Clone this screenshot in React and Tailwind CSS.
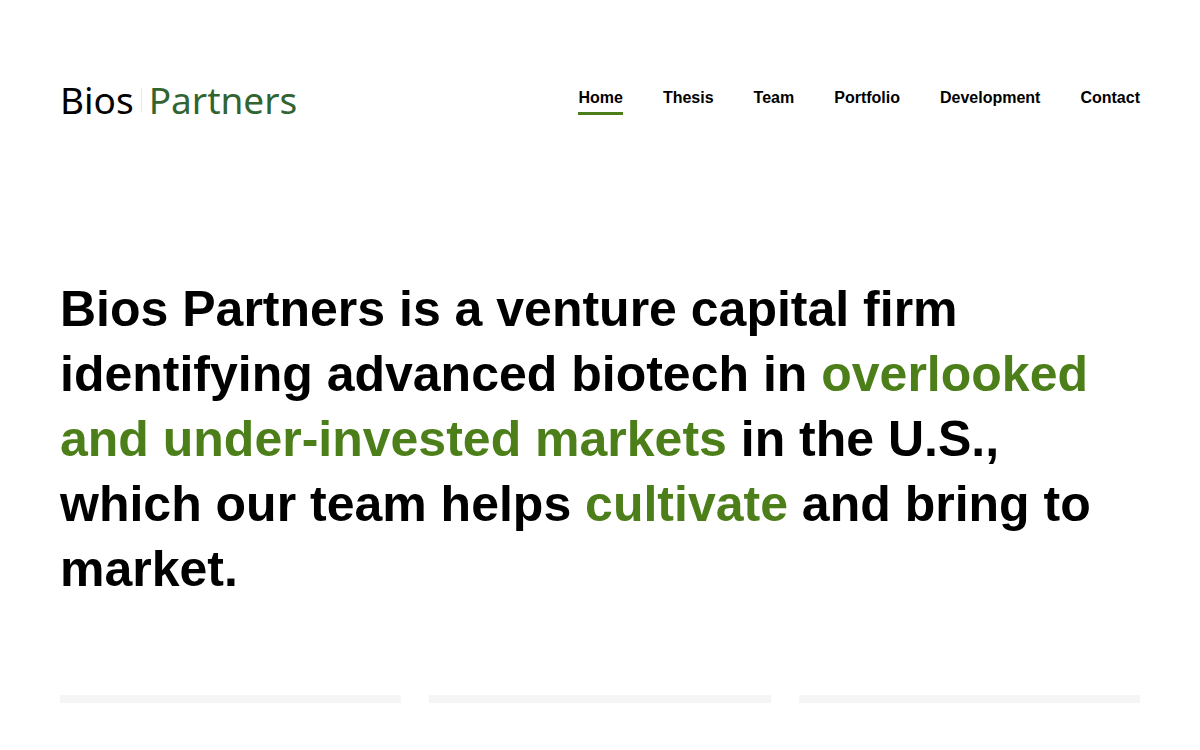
const navItems = ['Home', 'Thesis', 'Team', 'Portfolio', 'Development', 'Contact'];

const Logo = () => (
    <a
        href="#"
        className="flex items-center font-['Noto_Sans','Open_Sans',sans-serif] text-[37px] leading-[48px]"
    >
        <span className="text-black">Bios</span>
        <span className="mx-[7px] h-6 w-px bg-gray-200" />
        <span className="text-[#326431]">Partners</span>
    </a>
);

const Header = () => (
    <header className="flex items-start justify-between pt-[76px]">
        <Logo />
        <nav className="mt-2.5 flex gap-10">
            {navItems.map((item, i) => (
                <a
                    key={item}
                    href="#"
                    className={`border-b-3 pb-0.5 text-base leading-6 font-bold text-black ${i === 0 ? 'border-[#4c7f19]' : 'border-transparent'}`}
                >
                    {item}
                </a>
            ))}
        </nav>
    </header>
);

const Highlight = ({ children }) => <span className="text-[#4c7f19]">{children}</span>;

const App = () => {
    return (
        <div className="bg-white px-[60px] font-['Liberation_Sans',Arial,sans-serif]">
            <Header />
            <main>
                <h1 className="mt-[153px] text-[50px] leading-[65px] font-bold text-black">
                    Bios Partners is a venture capital firm identifying advanced biotech in{' '}
                    <Highlight>overlooked and under-invested markets</Highlight> in the U.S., which our
                    team helps <Highlight>cultivate</Highlight> and bring to market.
                </h1>
                <div className="mt-[93px] grid grid-cols-3 gap-7">
                    <div className="h-2 bg-[#f5f5f5]" />
                    <div className="h-2 bg-[#f5f5f5]" />
                    <div className="h-2 bg-[#f5f5f5]" />
                </div>
            </main>
        </div>
    );
};

export default App;
